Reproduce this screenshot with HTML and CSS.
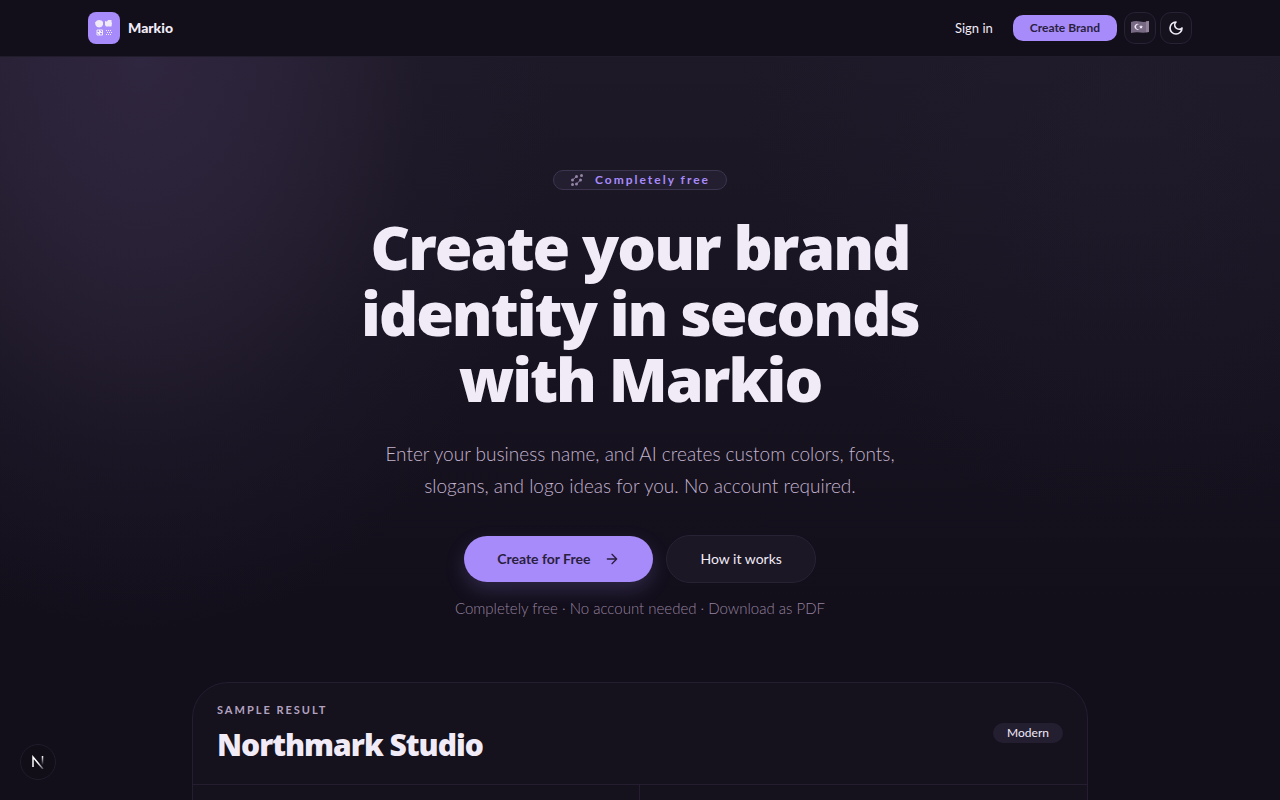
FILE: index.html
```
<!DOCTYPE html>
<html lang="en">
<head>
  <meta charset="UTF-8">
  <meta name="viewport" content="width=device-width, initial-scale=1.0">
  <title>Markio</title>
  <link rel="stylesheet" href="styles.css">
</head>
<body>
  <header class="site-header">
    <div class="header-inner">
      <a class="brand" href="#">
        <span class="brand-mark">
          <svg width="20" height="20" viewBox="0 0 20 20" fill="#f1ebf8">
            <path d="M3 2.5 5 2l2.500.5L9 4v2.500L8 8.500 5.500 9.500 3 9 1.500 7 1 4.500z"/>
            <path d="M11 3l2 .5L14 2h3.500v2l.5 1-.5 3.500H12L11 7z"/>
            <g fill="none" stroke="#f1ebf8">
              <path d="M3 12h5.500v5H3zM3 14.500h5M5.500 12v5M4 16l3-3"/>
              <path d="M12 12.500h5M13 14.500h5M12 16.500h5" stroke-dasharray="1 1"/>
            </g>
          </svg>
        </span>
        <span class="brand-name">Markio</span>
      </a>
      <nav class="header-nav">
        <a class="sign-in" href="#">Sign in</a>
        <a class="btn-small" href="#">Create Brand</a>
        <div class="header-tools">
          <button class="icon-btn" type="button" aria-label="Türkçe">
            <svg width="20" height="18" viewBox="0 0 20 18">
              <path d="M1 3q4.500-1.500 9-.5t9-.5v11q-4.500 1-9 .5t-9 .5z" fill="#796a83"/>
              <path d="M16 2.300l3-.3v11l-3 .3z" fill="#91829a"/>
              <path d="M9.500 5.500a3 3 0 1 0 0 4.600 2.500 2.500 0 1 1 0-4.600z" fill="#f1ebf8"/>
              <path d="M11 6l.6 1.200 1.400.2-1 .9.200 1.300-1.200-.6-1.200.6.200-1.300-.9-.9 1.400-.2z" fill="#f1ebf8"/>
            </svg>
          </button>
          <button class="icon-btn" type="button" aria-label="Toggle theme">
            <svg width="16" height="16" viewBox="0 0 24 24" fill="none" stroke="#f1ebf8" stroke-width="2.500" stroke-linecap="round" stroke-linejoin="round">
              <path d="M12 3a6 6 0 0 0 9 9 9 9 0 1 1-9-9Z"/>
            </svg>
          </button>
        </div>
      </nav>
    </div>
  </header>

  <main class="hero">
    <span class="badge">
      <svg width="14" height="14" viewBox="0 0 14 14" fill="#9484a8">
        <circle cx="11.500" cy="2.500" r="1.500"/>
        <circle cx="2.500" cy="7" r="1.500"/>
        <circle cx="2.500" cy="11.500" r="1.500"/>
        <circle cx="6.500" cy="11" r="1.500"/>
        <circle cx="10.500" cy="7" r="1.500"/>
        <circle cx="6.500" cy="3.500" r="1.500"/>
        <path d="M2.500 7l4-3.500M6.500 11l4-4" stroke="#9484a8" fill="none"/>
      </svg>
      Completely free
    </span>
    <h1>Create your brand identity in seconds with Markio</h1>
    <p class="lead">Enter your business name, and AI creates custom colors, fonts, slogans, and logo ideas for you. No account required.</p>
    <div class="actions">
      <a class="btn btn-primary" href="#">
        Create for Free
        <svg width="16" height="16" viewBox="0 0 24 24" fill="none" stroke="currentColor" stroke-width="2" stroke-linecap="round" stroke-linejoin="round">
          <path d="M5 12h14M12 5l7 7-7 7"/>
        </svg>
      </a>
      <a class="btn btn-secondary" href="#">How it works</a>
    </div>
    <p class="note">Completely free · No account needed · Download as PDF</p>
  </main>

  <section class="sample">
    <div class="sample-head">
      <div>
        <p class="sample-label">Sample result</p>
        <h2>Northmark Studio</h2>
      </div>
      <span class="tag">Modern</span>
    </div>
    <div class="sample-body">
      <div class="sample-col"></div>
      <div class="sample-col"></div>
    </div>
  </section>

  <button class="dev-badge" type="button" aria-label="Open dev tools">
    <svg width="14" height="14" viewBox="0 0 14 14" fill="none">
      <defs>
        <linearGradient id="fade-v" x1="0" y1="1" x2="0" y2="10" gradientUnits="userSpaceOnUse">
          <stop stop-color="#fff"/>
          <stop offset="1" stop-color="#fff" stop-opacity="0"/>
        </linearGradient>
        <linearGradient id="fade-d" x1="7" y1="8" x2="13" y2="14" gradientUnits="userSpaceOnUse">
          <stop stop-color="#fff"/>
          <stop offset="1" stop-color="#fff" stop-opacity="0.2"/>
        </linearGradient>
      </defs>
      <path d="M2 12V2l10 12" stroke="url(#fade-d)" stroke-width="1.500"/>
      <path d="M11.500 1v10" stroke="url(#fade-v)" stroke-width="1.500"/>
    </svg>
  </button>
</body>
</html>
```
FILE: styles.css
```
:root {
  --bg: #120e1a;
  --fg: #f1ebf8;
  --muted: #b3a3c0;
  --primary: #a78bfa;
  --surface: #1b1724;
  --border: #282235;
}

* {
  box-sizing: border-box;
}

body {
  margin: 0;
  background: var(--bg);
  color: var(--fg);
  font-family: Lato, "Open Sans", sans-serif;
  font-size: 14px;
  line-height: 20px;
}

h1, h2, p {
  margin: 0;
}

h1, h2 {
  font-family: "Open Sans", Lato, sans-serif;
  font-weight: 800;
}

a {
  color: inherit;
  text-decoration: none;
}

/* Header */
.site-header {
  border-bottom: 1px solid #211c2c;
}

.header-inner {
  display: flex;
  align-items: center;
  justify-content: space-between;
  max-width: 1152px;
  height: 56px;
  margin: 0 auto;
  padding: 0 24px;
}

.brand {
  display: flex;
  align-items: center;
  gap: 8px;
}

.brand-mark {
  display: flex;
  align-items: center;
  justify-content: center;
  width: 32px;
  height: 32px;
  border-radius: 8px;
  background: var(--primary);
}

.brand-name {
  font-weight: 900;
}

.header-nav {
  display: flex;
  align-items: center;
  font-size: 12px;
}

.sign-in {
  margin-right: 20px;
  font-size: 13px;
}

.btn-small {
  margin-right: 7px;
  padding: 3px 17px;
  border-radius: 10px;
  background: var(--primary);
  color: #2a1f3f;
  font-weight: 700;
}

.header-tools {
  display: flex;
  gap: 4px;
}

.icon-btn {
  display: flex;
  align-items: center;
  justify-content: center;
  width: 32px;
  height: 32px;
  padding: 0;
  border: 1px solid var(--border);
  border-radius: 11px;
  background: #15111d;
}

/* Hero */
.hero {
  display: flex;
  flex-direction: column;
  align-items: center;
  padding: 113px 24px 64px;
  text-align: center;
  background:
    radial-gradient(ellipse 420px 580px at 11% 0, #2f263f, rgba(44, 36, 58, 0.8) 35%, rgba(32, 27, 44, 0.5) 68%, transparent),
    radial-gradient(ellipse 380px 440px at 88% 4%, rgba(34, 30, 48, 0.5), transparent),
    linear-gradient(#1e1927, #120e1a 88%);
}

.badge {
  display: flex;
  align-items: center;
  gap: 11px;
  height: 20px;
  padding: 0 16px;
  border: 1px solid #3d3450;
  border-radius: 10px;
  background: #241e31;
  color: var(--primary);
  font-size: 12px;
  font-weight: 700;
  letter-spacing: 2px;
}

h1 {
  max-width: 600px;
  margin-top: 24px;
  font-size: 61px;
  line-height: 66px;
  letter-spacing: -2px;
}

.lead {
  max-width: 544px;
  margin-top: 26px;
  color: #c3b4cf;
  font-size: 19px;
  font-weight: 300;
  line-height: 32px;
}

.actions {
  display: flex;
  align-items: center;
  gap: 13px;
  margin-top: 33px;
}

.btn {
  display: flex;
  align-items: center;
  gap: 14px;
  height: 48px;
  padding: 0 33px;
  border-radius: 24px;
}

.btn-primary {
  height: 46px;
  background: var(--primary);
  color: #2a1f3f;
  font-weight: 700;
  box-shadow: 0 8px 20px rgba(167, 139, 250, 0.2);
}

.btn-secondary {
  border: 1px solid var(--border);
  background: var(--surface);
}

.note {
  margin-top: 15px;
  color: #94829f;
  font-size: 15px;
  font-weight: 300;
}

/* Sample result */
.sample {
  max-width: 896px;
  margin: 0 auto;
  border: 1px solid #241e30;
  border-radius: 36px;
  background: #15111d;
}

.sample-head {
  display: flex;
  align-items: center;
  justify-content: space-between;
  padding: 17px 24px 19px;
  border-bottom: 1px solid #241e30;
}

.sample-label {
  color: var(--muted);
  font-size: 11px;
  font-weight: 700;
  letter-spacing: 2px;
  text-transform: uppercase;
}

h2 {
  margin-top: 5px;
  font-size: 30px;
  line-height: 40px;
  letter-spacing: -1px;
}

.tag {
  padding: 0 14px;
  border-radius: 10px;
  background: #241e31;
  font-size: 12px;
}

.sample-body {
  display: grid;
  grid-template-columns: 1fr 1fr;
}

.sample-col {
  min-height: 320px;
}

.sample-col:first-child {
  border-right: 1px solid #241e30;
}

.dev-badge {
  position: fixed;
  left: 20px;
  bottom: 20px;
  display: flex;
  align-items: center;
  justify-content: center;
  width: 36px;
  height: 36px;
  padding: 0;
  border: 1px solid #221c2c;
  border-radius: 50%;
  background: #110e18;
}
```
